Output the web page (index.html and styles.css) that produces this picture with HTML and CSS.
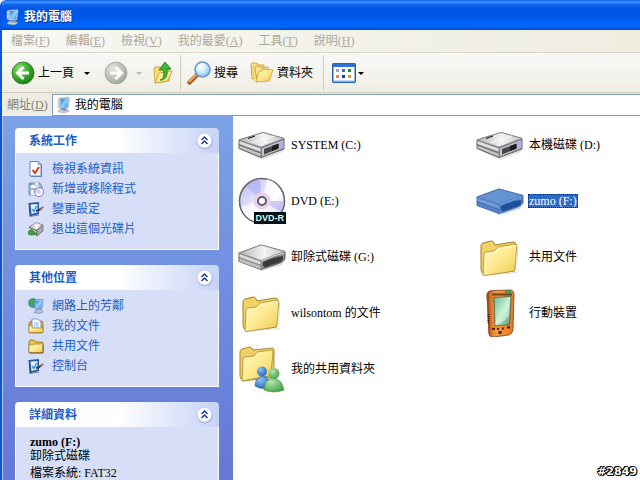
FILE: index.html
```html
<!DOCTYPE html>
<html lang="zh-Hant">
<head>
<meta charset="utf-8">
<title>我的電腦</title>
<link rel="stylesheet" href="styles.css">
</head>
<body>
<svg class="defs" width="0" height="0" aria-hidden="true">
  <defs>
    <linearGradient id="gScreen" x1="0" y1="0" x2="1" y2="1"><stop offset="0" stop-color="#1f78dc"/><stop offset=".5" stop-color="#90d2ff"/><stop offset="1" stop-color="#2b8cee"/></linearGradient>
    <linearGradient id="gFolder" x1="0" y1="0" x2="1" y2="1"><stop offset="0" stop-color="#fffbc0"/><stop offset=".5" stop-color="#fdea90"/><stop offset="1" stop-color="#f1c750"/></linearGradient>
    <linearGradient id="gTop" x1="0" y1="0" x2="1" y2="0"><stop offset="0" stop-color="#b4b4b4"/><stop offset=".55" stop-color="#f4f4f4"/><stop offset="1" stop-color="#c4c4c8"/></linearGradient>
    <linearGradient id="gDisc" x1="0" y1="0" x2="1" y2="1"><stop offset="0" stop-color="#aeb4ec"/><stop offset=".35" stop-color="#dcdcfa"/><stop offset=".6" stop-color="#ffffff"/><stop offset="1" stop-color="#cfc6f4"/></linearGradient>
    <linearGradient id="gPda" x1="0" y1="0" x2="1" y2="0"><stop offset="0" stop-color="#c65a12"/><stop offset=".35" stop-color="#f79a3c"/><stop offset="1" stop-color="#e07a20"/></linearGradient>
    <linearGradient id="gPdaScreen" x1="0" y1="0" x2="1" y2="1"><stop offset="0" stop-color="#6fb895"/><stop offset=".5" stop-color="#c8f0d4"/><stop offset="1" stop-color="#4f9476"/></linearGradient>
    <radialGradient id="gGreen" cx=".35" cy=".3" r=".8"><stop offset="0" stop-color="#8de07a"/><stop offset=".5" stop-color="#3cae2c"/><stop offset="1" stop-color="#15720f"/></radialGradient>
    <radialGradient id="gGray" cx=".35" cy=".3" r=".8"><stop offset="0" stop-color="#e2e2de"/><stop offset=".6" stop-color="#bcbcb8"/><stop offset="1" stop-color="#9a9a96"/></radialGradient>
    <radialGradient id="gLens" cx=".4" cy=".35" r=".7"><stop offset="0" stop-color="#ffffff"/><stop offset=".5" stop-color="#c8ecff"/><stop offset="1" stop-color="#7fbdf0"/></radialGradient>
    <radialGradient id="gBlueMan" cx=".35" cy=".3" r=".8"><stop offset="0" stop-color="#8cc0f4"/><stop offset="1" stop-color="#1c5fb8"/></radialGradient>
    <radialGradient id="gGreenMan" cx=".35" cy=".3" r=".8"><stop offset="0" stop-color="#b4e8ac"/><stop offset="1" stop-color="#3c9c40"/></radialGradient>
  </defs>

  <symbol id="computer" viewBox="0 0 16 16">
    <path d="M2 14l3-2 7 1 1 1-4 2-6-1z" fill="#c9ced8" stroke="#8b92a4" stroke-width=".5"/>
    <path d="M6 11h4l1 2-2 1-4-1z" fill="#8897b4"/>
    <path d="M2 2l2-1v10L2 10z" fill="#e0e4ee" stroke="#8d9cbd" stroke-width=".4"/>
    <path d="M4 1l8-.5q1.500 0 1.300 1.300L12 11l-8 .6z" fill="#b9cbe8" stroke="#7085b0" stroke-width=".5"/>
    <path d="M5 2l7.200-.4L11.200 10 5 10.500z" fill="url(#gScreen)"/>
  </symbol>

  <symbol id="back" viewBox="0 0 24 24">
    <circle cx="12" cy="12" r="11" fill="url(#gGreen)" stroke="#2b7a22" stroke-width=".8"/>
    <path d="M12.500 6L6.500 12l6 6M7 12h11" fill="none" stroke="#fff" stroke-width="3"/>
  </symbol>
  <symbol id="forward" viewBox="0 0 24 24">
    <circle cx="12" cy="12" r="11" fill="url(#gGray)" stroke="#a5a5a0" stroke-width=".8"/>
    <path d="M11.500 6l6 6-6 6M17 12H6" fill="none" stroke="#fff" stroke-width="3"/>
  </symbol>
  <symbol id="up" viewBox="0 0 20 24">
    <path d="M1 8l1-2 5 0 1 2 8-1v13L2 22z" fill="#f8dc74" stroke="#c99a2a" stroke-width=".8"/>
    <path d="M2 22l4-10 13-2-4 10z" fill="url(#gFolder)" stroke="#c99a2a" stroke-width=".8"/>
    <path d="M7 19c4 0 4-5 3.500-10L6 9l6-8 6 7-4 .5c1 7-2 10.500-7 10.500z" fill="#3fb836" stroke="#147a14" stroke-width=".8"/>
  </symbol>
  <symbol id="search" viewBox="0 0 24 24">
    <path d="M2.500 21.500L10 14" stroke="#a75c22" stroke-width="4.500" stroke-linecap="round"/>
    <path d="M2.500 20.500L9 14" stroke="#f3a765" stroke-width="1.800" stroke-linecap="round"/>
    <circle cx="15.500" cy="8.500" r="7.500" fill="url(#gLens)" stroke="#6f95cf" stroke-width="1.600"/>
    <path d="M11 6q2-3 5-2.500" fill="none" stroke="#fff" stroke-width="1.800"/>
  </symbol>
  <symbol id="folders" viewBox="0 0 24 22">
    <path d="M1 3l1-2h5l1 2 6 0v12l-12 2z" fill="#f9df80" stroke="#c99a2a" stroke-width=".8"/>
    <path d="M5 6l1-2 4 0 1 2 7-1v12L7 19z" fill="#fbe58d" stroke="#c99a2a" stroke-width=".8"/>
    <path d="M6 20L9 9l3 0 1-2 10 1-4 11z" fill="url(#gFolder)" stroke="#c99a2a" stroke-width=".8"/>
    <path d="M1 3l4 16 2 1L4 7z" fill="#fff3b0" stroke="#c99a2a" stroke-width=".5"/>
  </symbol>
  <symbol id="views" viewBox="0 0 24 20">
    <rect x=".75" y=".75" width="22.500" height="18.500" rx="1" fill="#fff" stroke="#2962b4" stroke-width="1.500"/>
    <path d="M1 1h22v3H1z" fill="#2f72cf"/>
    <path d="M2.500 17.500h19" stroke="#c4d4ee"/>
    <path d="M4 6h3v3H4z" fill="#a4a1c8"/><path d="M10 6h3v3h-3z" fill="#3270c8"/><path d="M16 6h3v3h-3z" fill="#228a34"/>
    <path d="M4 12h3v3H4z" fill="#e48661"/><path d="M10 12h3v3h-3z" fill="#123e9c"/><path d="M16 12h3v3h-3z" fill="#d0a820"/>
  </symbol>
  <symbol id="chevrons" viewBox="0 0 18 18">
    <circle cx="9" cy="9.500" r="8" fill="#8f9fd0" opacity=".5"/>
    <circle cx="8.500" cy="8.500" r="7.500" fill="#fff" stroke="#b6c2e4" stroke-width=".8"/>
    <path d="M5.500 8l3-3 3 3M5.500 12l3-3 3 3" fill="none" stroke="#1b3f8f" stroke-width="1.500"/>
  </symbol>

  <symbol id="info" viewBox="0 0 16 16">
    <path d="M3 1h8l3 3v12H3z" fill="#36508c" opacity=".7"/>
    <path d="M2 .5h8l3 3V15H2z" fill="#fff" stroke="#6b87bd"/>
    <path d="M10 .5v3h3z" fill="#bcd0f0" stroke="#6b87bd" stroke-width=".6"/>
    <path d="M4.500 9l2.500 3 4-6" fill="none" stroke="#df3f22" stroke-width="2"/>
  </symbol>
  <symbol id="programs" viewBox="0 0 16 16">
    <path d="M1 2h11l2 3v9H1z" fill="#9db8d8" stroke="#607fa8" stroke-width=".7"/>
    <path d="M3 4h8v3H3z" fill="#fff"/><path d="M1 2h3v2H1z" fill="#5fae72"/><path d="M3 9h4v5H3z" fill="#f3f8ff"/>
    <path d="M7 1l4 0-1 4H7z" fill="#edf5ff" stroke="#7b98c0" stroke-width=".5"/>
    <circle cx="11" cy="11" r="4.600" fill="url(#gDisc)" stroke="#7476ae" stroke-width=".8"/>
    <circle cx="11" cy="11" r="1.200" fill="#fff" stroke="#9290bd" stroke-width=".6"/>
  </symbol>
  <symbol id="settings" viewBox="0 0 16 16">
    <path d="M.5 2L11 1v12l-9.500 2.500z" fill="#2a559c"/>
    <path d="M2.500 3.500L9.500 3v8.500L3.500 13z" fill="#d9f0ff"/>
    <path d="M4 8l2 2.500L8.500 5" fill="none" stroke="#3b8be0" stroke-width="1.300"/>
    <path d="M8 10l3-1 2.500-1.500" fill="none" stroke="#21406e" stroke-width="2"/>
    <path d="M12 8l3.500-2" stroke="#b5643a" stroke-width="1.800"/>
    <path d="M2 15.500L11 14" stroke="#7080a6"/>
  </symbol>
  <symbol id="eject" viewBox="0 0 16 16">
    <path d="M1 6l7-4.500L15 4v6l-6 5-8-4z" fill="#777"/>
    <path d="M1 6l7-4.500L15 4 9 9z" fill="url(#gTop)" stroke="#666" stroke-width=".5"/>
    <path d="M9 9l6-5v6l-6 5z" fill="#a7a7a7" stroke="#555" stroke-width=".5"/>
    <path d="M1 7l7 3v2L1 9z" fill="#ddd"/>
    <path d="M0 11l3-2.500 4 2.500-1 3H1z" fill="#38a534" stroke="#17651c" stroke-width=".5"/>
  </symbol>
  <symbol id="network" viewBox="0 0 16 16">
    <circle cx="5" cy="5" r="4.800" fill="#2b88cd"/>
    <path d="M1 3q3-4 6-2L5 4 6 8 3 9Q0 7 1 3" fill="#44a946"/>
    <path d="M6 2l9-.5-1 9L7 11z" fill="#b6cbe9" stroke="#486c9d" stroke-width=".6"/>
    <path d="M7 3l7-.4-.8 7L8 10z" fill="url(#gScreen)"/>
    <path d="M8 12l5-1 2 3-4 1.500-5-1z" fill="#bac4da" stroke="#62759c" stroke-width=".6"/>
  </symbol>
  <symbol id="docs" viewBox="0 0 16 16">
    <path d="M1 5l2-2h11l1 2v9l-1 1H1z" fill="#e1ad37" stroke="#906718" stroke-width=".7"/>
    <path d="M4 1h6l3 3v9H4z" fill="#f7fbff" stroke="#4b7fb8" stroke-width=".7"/>
    <path d="M6 5h5M6 7h5M6 9h5" stroke="#72a7dc" stroke-width=".8"/>
    <path d="M1 14V8l3-1v3h11v4.500H1z" fill="url(#gFolder)" stroke="#9b7220" stroke-width=".6"/>
  </symbol>
  <symbol id="smallfolder" viewBox="0 0 16 16">
    <path d="M1 4l1-2h4l2 2h6l1 1v9.500H1z" fill="#ecc34d" stroke="#8f6b1b" stroke-width=".8"/>
    <path d="M1 14V7h3l2-1h9v8.500H1z" fill="url(#gFolder)" stroke="#a27a23" stroke-width=".7"/>
    <path d="M1.500 15.300h13.500V7" fill="none" stroke="#65552c" stroke-width=".7"/>
  </symbol>

  <symbol id="hdd" viewBox="0 0 48 48">
    <path d="M3 29l20 8 23-8-1 2-21 8z" fill="#bbb" opacity=".4"/>
    <path d="M1 19L25 11.500l21 6V28L23 36.500 1 27.500z" fill="#8a8a8a" stroke="#606060"/>
    <path d="M1 19L25 11.500l21 6L23 26z" fill="url(#gTop)" stroke="#808080" stroke-width=".7"/>
    <path d="M1.500 20l21 7.500v3L1.500 23z" fill="#e0e0e0"/><path d="M1.500 24.500l21 8v3l-21-8.500z" fill="#c4c4c4"/>
    <path d="M1.500 24l21 8" stroke="#666" stroke-width=".8"/>
    <path d="M23.500 27l22-8.500V27.500l-22 8.500z" fill="#c4c4cc" stroke="#666" stroke-width=".6"/>
    <path d="M26 28l15-5.500v5L26 33.500z" fill="#46464c"/><path d="M34 25l6-2.200v5l-6 2.200z" fill="#1c1c20"/><path d="M41.500 21.500l4-1.500v7l-4 1.500z" fill="#b4acdf"/>
    <path d="M10 17.500l7-2.500" stroke="#222" stroke-width="1.300"/><path d="M15 21.500L36 15" stroke="#fff" opacity=".8"/>
  </symbol>
  <symbol id="removable" viewBox="0 0 48 48">
    <path d="M4 30l19 7 23-9-2 4-20 6z" fill="#aaa" opacity=".4"/>
    <path d="M1 20L23 12l24 6.500V26q-1 3-8 5L23 36.500 1 28.500z" fill="#8f8f8f" stroke="#606060"/>
    <path d="M1 20L23 12l24 6.500q-10 3-24 9z" fill="url(#gTop)" stroke="#808080" stroke-width=".7"/>
    <path d="M1.500 21l21 7.500v3l-21-7.500z" fill="#dadada"/><path d="M1.500 25.500l21 7.500v3l-21-7.500z" fill="#c2c2c2"/>
    <path d="M25 29q11-5 20-6v3q-1 3-7 4.500l-11 4q-3-1.500-2-5.500" fill="#3a3a3a"/>
    <path d="M24 28q12-6 22-8" fill="none" stroke="#d7d7d7"/>
  </symbol>
  <symbol id="drive-blue" viewBox="0 0 48 48">
    <path d="M4 30l19 7 23-9-2 4-20 6z" fill="#7997c7" opacity=".4"/>
    <path d="M1 20L23 12l24 6.500V26q-1 3-8 5L23 36.500 1 28.500z" fill="#5484c8" stroke="#3f6cb0"/>
    <path d="M1 20L23 12l24 6.500q-10 3-24 9z" fill="#6592d2" stroke="#4673b8" stroke-width=".7"/>
    <path d="M1.500 21l21 7.500v3l-21-7.500z" fill="#729cda"/><path d="M1.500 25l21 7.500" stroke="#3a69b0" stroke-width=".8"/>
    <path d="M25 29q11-5 20-6v3q-1 3-7 4.500l-11 4q-3-1.500-2-5.500" fill="#1f4f98"/>
    <path d="M24 28q12-6 22-8" fill="none" stroke="#7aa2de"/>
  </symbol>
  <symbol id="dvd" viewBox="0 0 48 48">
    <circle cx="24" cy="24" r="22.500" fill="url(#gDisc)" stroke="#65656b" stroke-width="1.600"/>
    <path d="M24 24L8 9Q14 3 22 2.500zM24 24l19 11q3-5 3-11z" fill="#a8a8ed" opacity=".55"/>
    <path d="M24 24L29 2Q39 5 43 14zM24 24L3 30q3 9 10 13z" fill="#fff" opacity=".7"/>
    <circle cx="24" cy="24" r="8.500" fill="#ead0ee"/>
    <circle cx="24" cy="24" r="4" fill="#fff" stroke="#5e5e66" stroke-width="2"/>
  </symbol>
  <symbol id="folder" viewBox="0 0 48 48">
    <path d="M8 43l33-4V14l1 0-1 26z" fill="#b8b39a" opacity=".5"/>
    <path d="M5 13q0-2 2-3l8-2q2 0 2.500 1l1.500 3 18-3q3 0 3 3l-1.500 26L8 42q-3-3-3-6z" fill="#f3d163" stroke="#9c7e2c"/>
    <path d="M7 42L8 21q0-2 2-2l8-1 4-4 17-3q2 0 1.800 2L39 36q0 2-2 2.200L8.500 42.500Q7 43 7 42z" fill="url(#gFolder)" stroke="#b08e38" stroke-width=".8"/>
    <path d="M9.500 38L10 21l9-1 4-4 15-3" fill="none" stroke="#fffbd2"/>
  </symbol>
  <symbol id="shared" viewBox="0 0 48 48">
    <path d="M2 7q0-2 2-3l8-2q2 0 3 3l19-2q2 0 2 2v27L5 36q-3-2-3-5z" fill="#efcf67" stroke="#aa8933"/>
    <path d="M4 36L5 14q0-2 2-2l9-1 3-4 14-2q2 0 2 2l-2 22q0 2-2 2z" fill="url(#gFolder)" stroke="#ad8932" stroke-width=".8"/>
    <path d="M17 41q0-9 8-10 7 1 8 10-8 5-16 0z" fill="url(#gBlueMan)" stroke="#2d67af" stroke-width=".6"/><circle cx="24" cy="26.500" r="5" fill="url(#gBlueMan)"/>
    <path d="M26 45q0-11 9-12 9 1 11 12-10 4-20 0z" fill="url(#gGreenMan)" stroke="#488f48" stroke-width=".6"/><circle cx="36" cy="28.500" r="5.500" fill="url(#gGreenMan)"/>
  </symbol>
  <symbol id="pda" viewBox="0 0 48 48">
    <path d="M11 5q1-3 5-3.500L34 1q4 0 4 5l-1 35q-1 4-4 5L17 48q-4 0-4-4z" fill="url(#gPda)" stroke="#7a4020" stroke-width=".8"/>
    <path d="M11 5q-1 1 0 7l1.500 32q0 2 2 3.500L13 5l2-3.500q-3 0-4 3.500" fill="#9a4f20"/>
    <path d="M16 5.500h20" stroke="#70401f" stroke-width="2"/><rect x="29" y="1.500" width="6" height="3" fill="#3e9c4e"/>
    <path d="M18 8.500l17-1-1.500 28-14.500 1.500z" fill="url(#gPdaScreen)" stroke="#4c5a40" stroke-width=".8"/>
    <path d="M19 34q9-10 14-23v16q-5 6-14 8.500" fill="#e7ffee" opacity=".45"/>
    <path d="M16 40l3-.3M21 40l2-.3M26 39.500l2-.3M31 38.500l3-.3" stroke="#4f210f" stroke-width="2"/><circle cx="24" cy="43.500" r="1.800" fill="#562b17"/>
    <path d="M12.500 25v9" stroke="#36170d" stroke-width="2" stroke-dasharray="1 1"/>
  </symbol>
</svg>

<div class="window">
  <header class="titlebar">
    <svg class="icon16"><use href="#computer"/></svg>
    <h1>我的電腦</h1>
  </header>

  <nav class="menubar" aria-label="功能表">
    <button>檔案(<u>F</u>)</button>
    <button>編輯(<u>E</u>)</button>
    <button>檢視(<u>V</u>)</button>
    <button>我的最愛(<u>A</u>)</button>
    <button>工具(<u>T</u>)</button>
    <button>說明(<u>H</u>)</button>
  </nav>

  <div class="toolbar" role="toolbar">
    <button class="tool tool-back"><svg class="icon24"><use href="#back"/></svg>上一頁<i class="arrow"></i></button>
    <button class="tool tool-forward" aria-label="下一頁"><svg class="icon24"><use href="#forward"/></svg><i class="arrow arrow-dim"></i></button>
    <button class="tool tool-up" aria-label="上一層"><svg class="icon-up"><use href="#up"/></svg></button>
    <span class="divider"></span>
    <button class="tool tool-search"><svg class="icon24"><use href="#search"/></svg>搜尋</button>
    <button class="tool tool-folders"><svg class="icon-folders"><use href="#folders"/></svg>資料夾</button>
    <span class="divider"></span>
    <button class="tool tool-views" aria-label="檢視方式"><svg class="icon-views"><use href="#views"/></svg><i class="arrow"></i></button>
  </div>

  <div class="addressbar">
    <label for="address">網址(<u>D</u>)</label>
    <div class="field">
      <svg class="icon16"><use href="#computer"/></svg>
      <input id="address" type="text" value="我的電腦">
    </div>
  </div>

  <div class="body">
    <aside class="sidebar">
      <section class="panel">
        <header><h2>系統工作</h2><button aria-label="收合系統工作"><svg class="icon18"><use href="#chevrons"/></svg></button></header>
        <ul>
          <li><a href="#"><svg class="icon16"><use href="#info"/></svg>檢視系統資訊</a></li>
          <li><a href="#"><svg class="icon16"><use href="#programs"/></svg>新增或移除程式</a></li>
          <li><a href="#"><svg class="icon16"><use href="#settings"/></svg>變更設定</a></li>
          <li><a href="#"><svg class="icon16"><use href="#eject"/></svg>退出這個光碟片</a></li>
        </ul>
      </section>
      <section class="panel">
        <header><h2>其他位置</h2><button aria-label="收合其他位置"><svg class="icon18"><use href="#chevrons"/></svg></button></header>
        <ul>
          <li><a href="#"><svg class="icon16"><use href="#network"/></svg>網路上的芳鄰</a></li>
          <li><a href="#"><svg class="icon16"><use href="#docs"/></svg>我的文件</a></li>
          <li><a href="#"><svg class="icon16"><use href="#smallfolder"/></svg>共用文件</a></li>
          <li><a href="#"><svg class="icon16"><use href="#settings"/></svg>控制台</a></li>
        </ul>
      </section>
      <section class="panel">
        <header><h2>詳細資料</h2><button aria-label="收合詳細資料"><svg class="icon18"><use href="#chevrons"/></svg></button></header>
        <div class="details">
          <p><strong>zumo (F:)</strong></p>
          <p>卸除式磁碟</p>
          <p class="spaced">檔案系統: FAT32</p>
        </div>
      </section>
    </aside>

    <main class="files">
      <a class="file" href="#"><svg class="icon48"><use href="#hdd"/></svg><span>SYSTEM (C:)</span></a>
      <a class="file" href="#"><svg class="icon48"><use href="#hdd"/></svg><span>本機磁碟 (D:)</span></a>
      <a class="file" href="#"><span class="thumb"><svg class="icon48"><use href="#dvd"/></svg><b class="tag">DVD-R</b></span><span>DVD (E:)</span></a>
      <a class="file selected" href="#"><svg class="icon48"><use href="#drive-blue"/></svg><span>zumo (F:)</span></a>
      <a class="file" href="#"><svg class="icon48"><use href="#removable"/></svg><span>卸除式磁碟 (G:)</span></a>
      <a class="file" href="#"><svg class="icon48"><use href="#folder"/></svg><span>共用文件</span></a>
      <a class="file" href="#"><svg class="icon48"><use href="#folder"/></svg><span>wilsontom 的文件</span></a>
      <a class="file" href="#"><svg class="icon48"><use href="#pda"/></svg><span>行動裝置</span></a>
      <a class="file" href="#"><svg class="icon48"><use href="#shared"/></svg><span>我的共用資料夾</span></a>
    </main>
  </div>
  <span class="counter">#2849</span>
</div>
</body>
</html>
```
FILE: styles.css
```css
* { box-sizing: border-box; }
body {
  margin: 0;
  background: #fff;
  color: #000;
  font: 12px/16px "Liberation Serif", "Noto Sans CJK TC", serif;
}
.defs { position: absolute; }
svg { display: block; flex: none; }
button, input { font: inherit; color: inherit; border: 0; padding: 0; background: none; }
a { color: inherit; text-decoration: none; }
h1, h2, p, ul { margin: 0; padding: 0; font-size: 12px; }
ul { list-style: none; }

.icon16 { width: 16px; height: 16px; }
.icon18 { width: 18px; height: 18px; }
.icon24 { width: 24px; height: 24px; }
.icon48 { width: 48px; height: 48px; }
.icon-up { width: 20px; height: 24px; }
.icon-folders { width: 24px; height: 22px; }
.icon-views { width: 24px; height: 20px; }

.window {
  position: relative;
  display: flex;
  flex-direction: column;
  height: 100vh;
  overflow: hidden;
  border-left: 2px solid #0a55e0;
  border-top-left-radius: 6px;
}

.titlebar {
  display: flex;
  align-items: center;
  gap: 3px;
  flex: none;
  height: 30px;
  padding: 3px 3px 0;
  color: #fff;
  background: linear-gradient(#0a5ae0 0, #3d95ff 2px, #0a62ee 5px, #0054e3 10px, #0058ea 18px, #0066ff 25px, #0062f4 27px, #0048c8 30px);
}
.titlebar h1 { text-shadow: 1px 1px #0a2a80; }

.menubar {
  display: flex;
  gap: 16px;
  flex: none;
  height: 23px;
  padding: 0 9px;
  color: #aca899;
  background: linear-gradient(90deg, #f7f7f4, #efede0);
  border-bottom: 1px solid #d8d4c4;
}

.toolbar {
  display: flex;
  align-items: center;
  flex: none;
  height: 40px;
  padding: 0 9px;
  background: linear-gradient(#f8f8f6, #efeee5);
  border-top: 1px solid #fff;
  border-bottom: 1px solid #d0ccbb;
}
.tool { display: flex; align-items: center; gap: 3px; }
.tool-back { margin-right: 14px; }
.tool-back .arrow { margin-left: 7px; }
.tool-forward { gap: 8px; margin-right: 11px; }
.tool-up { margin-right: 7px; }
.tool-search { margin: 0 12px 0 6px; }
.tool-folders { margin-right: 10px; }
.tool-views { margin-left: 8px; gap: 2px; }
.arrow { border: 3px solid transparent; border-top-color: #000; border-bottom: 0; }
.arrow-dim { border-top-color: #bcb9ac; }
.divider { width: 1px; height: 36px; background: #d0ccbc; }

.addressbar {
  display: flex;
  align-items: center;
  gap: 4px;
  flex: none;
  height: 23px;
  padding-left: 5px;
  color: #808078;
  background: #efede3;
}
.field {
  display: flex;
  align-items: center;
  gap: 3px;
  flex: 1;
  height: 22px;
  padding-left: 3px;
  color: #000;
  background: #fff;
  border: 1px solid #7f9db9;
  border-right: 0;
}
.field input { flex: 1; min-width: 0; outline: 0; }

.body { display: flex; flex: 1; min-height: 0; }

.sidebar {
  display: flex;
  flex-direction: column;
  gap: 15px;
  flex: none;
  width: 231px;
  padding: 12px 14px 0 12px;
  overflow: hidden;
  border-left: 1px solid #b4c8f0;
  background: linear-gradient(#7ba2e7, #6577d7);
}
.panel { flex: none; }
.panel header {
  display: flex;
  align-items: center;
  justify-content: space-between;
  height: 25px;
  padding: 0 5px 0 14px;
  color: #215dc6;
  background: linear-gradient(90deg, #fff 50%, #c6d3f7);
  border-radius: 4px 4px 0 0;
}
.panel ul, .details {
  color: #215dc6;
  background: #d6dff7;
  border: 1px solid #fff;
  border-top: 0;
}
.panel ul { padding: 6px 12px 10px; }
.panel li a { display: flex; align-items: center; gap: 8px; height: 20px; }
.panel .details { min-height: 80px; padding: 8px 14px; color: #000; line-height: 14px; }
.details .spaced { margin-top: 3px; }

.files {
  display: grid;
  grid-template-columns: repeat(auto-fill, 238px);
  grid-auto-rows: 56px;
  flex: 1;
  padding: 1px 0 0 5px;
  margin-right: -80px;
  background: #fff;
}
.file { display: flex; align-items: center; gap: 4px; }
.file > span:last-child { padding: 0 1px; line-height: 14px; }
.selected > span:last-child { color: #fff; background: #316ac5; outline: 1px dotted #102a60; outline-offset: -1px; }
.thumb { position: relative; }
.tag {
  position: absolute;
  right: 0;
  bottom: 1px;
  padding: 0 2px;
  color: #c8fff4;
  background: #001014;
  font: bold 9px/12px "Liberation Sans", sans-serif;
}

.counter {
  position: absolute;
  right: 3px;
  bottom: 0;
  color: #fff;
  font: bold 11px/16px "DejaVu Sans", sans-serif;
  text-shadow: 1px 0 #000, -1px 0 #000, 0 1px #000, 0 -1px #000, 1px 1px #000, -1px -1px #000;
}
```
